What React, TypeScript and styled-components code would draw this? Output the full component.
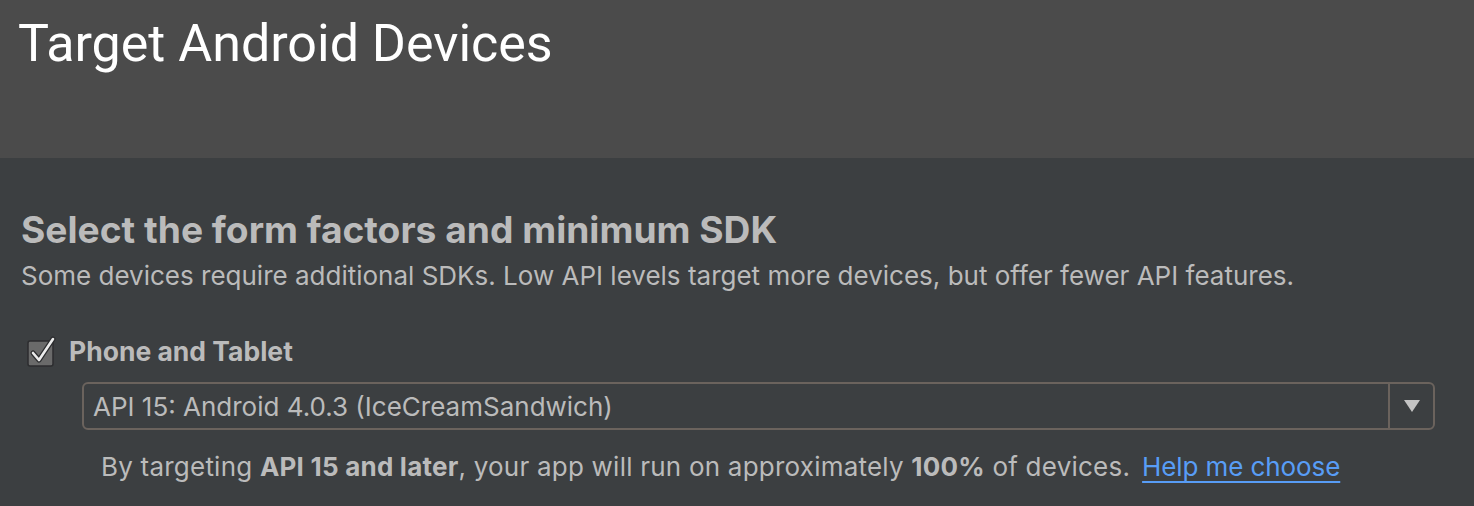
import React from "react";
import styled, { createGlobalStyle } from "styled-components";

const GlobalStyle = createGlobalStyle`
  html, body {
    margin: 0;
    padding: 0;
    background: #3c3f41;
  }
  body {
    font-family: "Inter", "Liberation Sans", sans-serif;
    -webkit-font-smoothing: antialiased;
  }
`;

const Page = styled.div`
  width: 1474px;
  height: 506px;
  overflow: hidden;
  display: flex;
  flex-direction: column;
`;

const Header = styled.header`
  height: 158px;
  flex-shrink: 0;
  background: #4b4b4b;
  padding: 12px 0 0 18px;
  box-sizing: border-box;
`;

const Title = styled.h1`
  margin: 0;
  font-family: "Roboto", "Liberation Sans", sans-serif;
  font-weight: 400;
  font-size: 52px;
  line-height: 64px;
  color: #ffffff;
`;

const Body = styled.main`
  flex: 1;
  background: #3c3f41;
  padding: 50px 0 0 21px;
  color: #bbbbbb;
`;

const Heading = styled.h2`
  margin: 0;
  font-size: 37.2px;
  line-height: 44px;
  font-weight: 700;
  color: #bbbbbb;
`;

const Subtitle = styled.p`
  margin: 7px 0 0;
  font-size: 26px;
  line-height: 34px;
`;

const CheckRow = styled.label`
  display: flex;
  align-items: center;
  gap: 12px;
  margin: 41px 0 0 6px;
  height: 34px;
`;

const CheckLabel = styled.span`
  font-size: 26.5px;
  font-weight: 700;
  color: #bbbbbb;
`;

const Indent = styled.div`
  margin-left: 61px;
  width: 1353px;
`;

const Select = styled.div`
  margin-top: 14px;
  height: 48px;
  box-sizing: border-box;
  border: 2px solid #6b635d;
  border-radius: 6px;
  display: flex;
  align-items: stretch;
`;

const SelectValue = styled.div`
  flex: 1;
  display: flex;
  align-items: center;
  padding-left: 9px;
  font-size: 26px;
  color: #bbbbbb;
`;

const SelectArrow = styled.div`
  width: 43px;
  border-left: 2px solid #6b635d;
  display: flex;
  align-items: center;
  justify-content: center;
`;

const Note = styled.p`
  margin: 19px 0 0 19px;
  font-size: 26px;
  line-height: 36px;
  color: #bbbbbb;
  letter-spacing: 0.22px;
`;

const Link = styled.a`
  margin-left: 12px;
  color: #589df6;
  letter-spacing: -0.1px;
  text-decoration: underline;
  text-underline-offset: 5px;
  text-decoration-thickness: 2px;
`;

const CheckIcon = () => (
  <svg width="30" height="32" viewBox="0 0 30 32">
    <rect x="1" y="6" width="25" height="25" rx="2" fill="#6a6a6a" stroke="#2c2d2f" strokeWidth="1.5" />
    <path d="M6 18 L12 25 L26 4" fill="none" stroke="#2c2d2f" strokeWidth="5" strokeLinecap="round" strokeLinejoin="round" />
    <path d="M6 18 L12 25 L26 4" fill="none" stroke="#ececec" strokeWidth="2.6" strokeLinecap="round" strokeLinejoin="round" />
  </svg>
);

const Triangle = () => (
  <svg width="16" height="12" viewBox="0 0 16 12">
    <path d="M0 0 H16 L8 12 Z" fill="#c4c4c4" />
  </svg>
);

export default function App() {
  return (
    <Page>
      <GlobalStyle />
      <Header>
        <Title>Target Android Devices</Title>
      </Header>
      <Body>
        <Heading>Select the form factors and minimum SDK</Heading>
        <Subtitle>
          Some devices require additional SDKs. Low API levels target more devices, but offer fewer API features.
        </Subtitle>
        <CheckRow>
          <CheckIcon />
          <CheckLabel>Phone and Tablet</CheckLabel>
        </CheckRow>
        <Indent>
          <Select>
            <SelectValue>API 15: Android 4.0.3 (IceCreamSandwich)</SelectValue>
            <SelectArrow>
              <Triangle />
            </SelectArrow>
          </Select>
          <Note>
            By targeting <b>API 15 and later</b>, your app will run on approximately <b>100%</b> of devices.
            <Link href="#">Help me choose</Link>
          </Note>
        </Indent>
      </Body>
    </Page>
  );
}
